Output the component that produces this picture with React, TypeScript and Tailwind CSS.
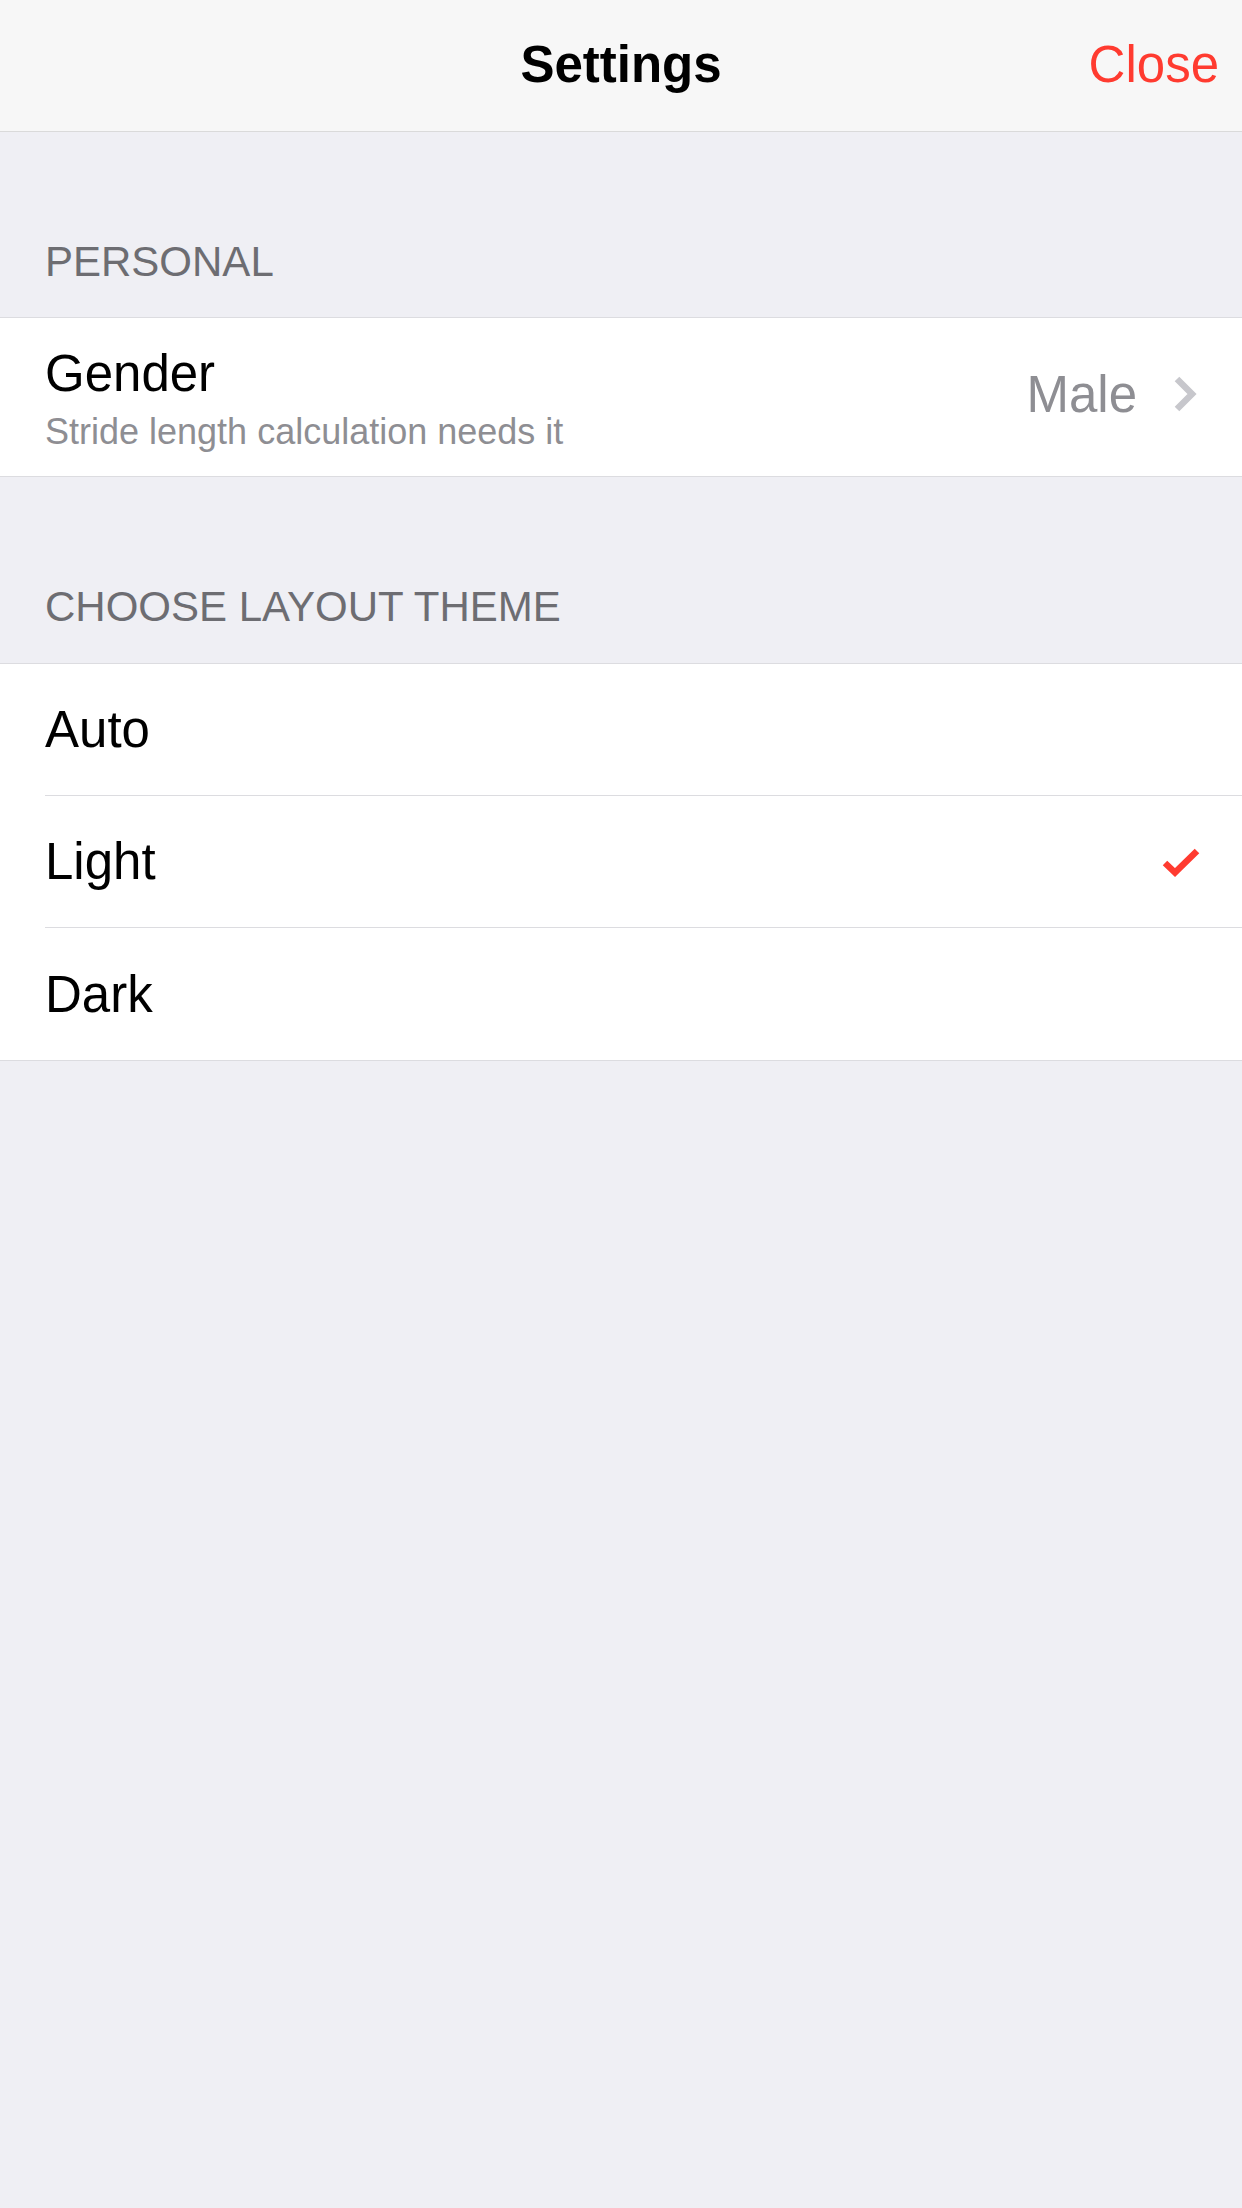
import { type ReactNode } from "react";

const themes = ["Auto", "Light", "Dark"];

const SectionHeader = ({ title, className }: { title: string; className: string }) => (
  <div className={`flex items-end px-[45px] ${className}`}>
    <p className="text-[42px] leading-none text-[#6d6d72]">{title}</p>
  </div>
);

const Chevron = () => (
  <svg width="24" height="38" viewBox="0 0 24 38" fill="none">
    <polyline points="4,4 19,19 4,34" stroke="#c7c7cc" strokeWidth="6.5" strokeLinejoin="miter" />
  </svg>
);

const Check = () => (
  <svg width="40" height="30" viewBox="0 0 40 30" fill="none">
    <polyline points="5,16 15,25.5 37,4" stroke="#ff3b30" strokeWidth="6.5" strokeLinejoin="miter" />
  </svg>
);

const ThemeRow = ({ label, selected, last, children }: { label: string; selected: boolean; last: boolean; children?: ReactNode }) => (
  <div className="pl-[45px]">
    <div className={`flex h-[132px] items-center justify-between pr-[42px] ${last ? "" : "border-b border-[#dcdce0]"}`}>
      <span className="text-[51px] leading-none text-black">{label}</span>
      {selected ? <Check /> : null}
      {children}
    </div>
  </div>
);

const App = () => {
  return (
    <div className="min-h-screen bg-[#efeff4] font-['Liberation_Sans',Arial,sans-serif]">
      <header className="grid h-[132px] grid-cols-[1fr_auto_1fr] items-center border-b border-[#dadada] bg-[#f7f7f7] pb-[3px]">
        <div />
        <h1 className="text-[51px] font-bold leading-none text-black">Settings</h1>
        <button className="justify-self-end pr-[23px] text-[51px] leading-none text-[#ff3b30]">Close</button>
      </header>

      <SectionHeader title="PERSONAL" className="h-[185px] pb-[34px]" />
      <div className="flex items-center justify-between border-y border-[#dcdce0] bg-white pl-[45px] pr-[45px]">
        <div className="flex flex-col gap-[15px] pb-[26px] pt-[30px]">
          <span className="text-[51px] leading-none text-black">Gender</span>
          <span className="text-[36px] leading-none text-[#8e8e93]">Stride length calculation needs it</span>
        </div>
        <div className="flex items-center gap-[36px] pb-[6px]">
          <span className="text-[51px] leading-none text-[#8e8e93]">Male</span>
          <Chevron />
        </div>
      </div>

      <SectionHeader title="CHOOSE LAYOUT THEME" className="h-[186px] pb-[35px]" />
      <div className="border-y border-[#dcdce0] bg-white">
        {themes.map((theme, i) => (
          <ThemeRow key={theme} label={theme} selected={theme === "Light"} last={i === themes.length - 1} />
        ))}
      </div>
    </div>
  );
};

export default App;
